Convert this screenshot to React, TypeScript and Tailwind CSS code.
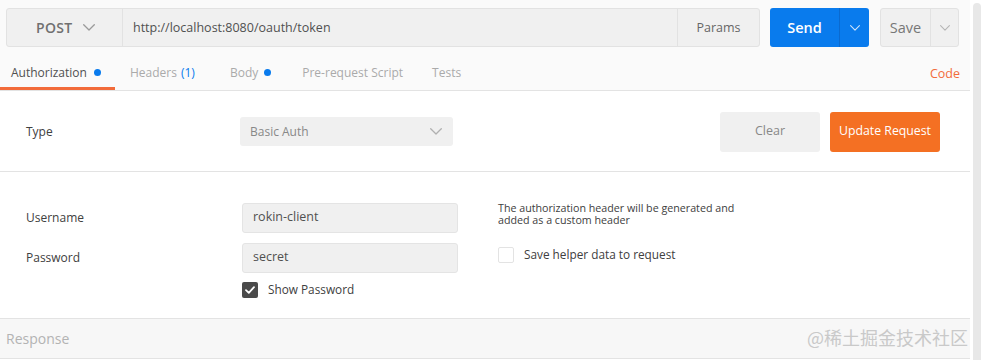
import React from "react";

const Chevron = ({ className = "", color = "#9a9a9a", w = 12, h = 7 }: { className?: string; color?: string; w?: number; h?: number }) => (
  <svg width={w} height={h} viewBox="0 0 12 7" className={className} fill="none">
    <polyline points="0.7,0.7 6,6 11.3,0.7" stroke={color} strokeWidth="1.3" strokeLinejoin="round" strokeLinecap="round" />
  </svg>
);

export default function App() {
  return (
    <div className="w-[981px] h-[360px] bg-white flex relative overflow-hidden font-['Open_Sans',sans-serif]">
      <div className="w-[970px] flex flex-col">
        {/* top */}
        <div className="bg-[#fafafa]">
          <div className="flex pt-[8px] pl-[6px] h-[47px]">
            <div className="flex w-[754px] h-[39px] rounded-[3px] border border-[#e2e2e2] bg-[#f0f0f0]">
              <div className="w-[116px] flex items-center pl-[29px] border-r border-[#e2e2e2]">
                <span className="text-[14px] text-[#707070] font-semibold tracking-[0.3px]">POST</span>
                <Chevron className="ml-[11px]" />
              </div>
              <div className="flex-1 flex items-center pl-[10px] pt-[1px] text-[12.5px] text-[#505050]">http://localhost:8080/oauth/token</div>
              <div className="w-[82px] flex items-center justify-center pt-[1px] border-l border-[#e2e2e2] text-[12.5px] text-[#666]">Params</div>
            </div>
            <div className="ml-[10px] flex w-[99px] h-[39px] rounded-[3px] bg-[#097bed]">
              <div className="w-[69px] flex items-center justify-center text-white text-[14.5px] font-semibold">Send</div>
              <div className="flex-1 flex items-center justify-center border-l border-[#0a6ad0]">
                <Chevron color="#cfe4fb" w={10} h={6} />
              </div>
            </div>
            <div className="ml-[11px] flex w-[79px] h-[39px] rounded-[3px] border border-[#e2e2e2] bg-[#f0f0f0]">
              <div className="w-[49px] flex items-center justify-center text-[#777] text-[14.5px]">Save</div>
              <div className="flex-1 flex items-center justify-center border-l border-[#e2e2e2]">
                <Chevron color="#b5b5b5" w={10} h={6} />
              </div>
            </div>
          </div>
          <div className="flex items-stretch h-[44px] border-b border-[#e3e3e3] text-[12px]">
            <div className="relative flex items-center pt-[8px] pl-[11px] w-[115px] text-[#505050]">
              Authorization
              <span className="ml-[7px] w-[7px] h-[7px] rounded-full bg-[#097bed]" />
              <div className="absolute left-0 right-0 bottom-0 h-[3px] bg-[#f26b3a]" />
            </div>
            <div className="flex items-center pt-[8px] ml-[15px] text-[#aaa]">
              Headers <span className="ml-[4px] text-[#097bed]">(1)</span>
            </div>
            <div className="flex items-center pt-[8px] ml-[35px] text-[#aaa]">
              Body
              <span className="ml-[6px] w-[7px] h-[7px] rounded-full bg-[#097bed]" />
            </div>
            <div className="flex items-center pt-[8px] ml-[31px] text-[#aaa]">Pre-request Script</div>
            <div className="flex items-center pt-[8px] ml-[29px] text-[#aaa]">Tests</div>
            <div className="flex-1" />
            <div className="flex items-end pb-[6px] pr-[10px] text-[#f26b3a] text-[12.5px]">Code</div>
          </div>
        </div>

        {/* type section */}
        <div className="flex items-center h-[81px] pt-[1px] border-b border-[#e3e3e3] text-[12px]">
          <div className="pl-[26px] w-[240px] text-[#404040]">Type</div>
          <div className="w-[213px] h-[29px] rounded-[3px] bg-[#f0f0f0] flex items-center pl-[10px] pr-[11px] text-[#888]">
            <span className="flex-1">Basic Auth</span>
            <Chevron color="#b0b0b0" />
          </div>
          <div className="flex-1" />
          <div className="w-[100px] h-[40px] rounded-[3px] bg-[#f0f0f0] flex items-center justify-center text-[#888] text-[12.5px]">Clear</div>
          <div className="ml-[10px] w-[110px] h-[40px] rounded-[3px] bg-[#f47023] flex items-center justify-center text-white text-[12.3px]">Update Request</div>
          <div className="w-[30px]" />
        </div>

        {/* credentials */}
        <div className="flex h-[146px] pt-[30px] text-[12px] text-[#404040]">
          <div className="flex flex-col pl-[26px]">
            <div className="flex items-center h-[30px] pt-[1px]">
              <span className="w-[216px]">Username</span>
              <div className="w-[216px] h-[30px] rounded-[3px] border border-[#e4e4e4] bg-[#f0f0f0] flex items-center pl-[10px] text-[#505050] text-[12.5px]">rokin-client</div>
            </div>
            <div className="flex items-center h-[30px] mt-[10px] pt-[1px]">
              <span className="w-[216px]">Password</span>
              <div className="w-[216px] h-[30px] rounded-[3px] border border-[#e4e4e4] bg-[#f0f0f0] flex items-center pl-[10px] text-[#505050] text-[12.5px]">secret</div>
            </div>
            <div className="flex items-center h-[16px] mt-[10px] pl-[216px]">
              <div className="w-[16px] h-[16px] rounded-[2px] bg-[#4a4a4a] flex items-center justify-center">
                <svg width="10" height="8" viewBox="0 0 10 8" fill="none">
                  <polyline points="1,4.2 3.8,6.8 9,1.2" stroke="white" strokeWidth="1.8" strokeLinecap="round" strokeLinejoin="round" />
                </svg>
              </div>
              <span className="ml-[10px] text-[11.8px]">Show Password</span>
            </div>
          </div>
          <div className="flex flex-col ml-[40px]">
            <div className="text-[10.7px] leading-[12px] text-[#404040] w-[260px]">
              <div>The authorization header will be generated and</div>
              <div>added as a custom header</div>
            </div>
            <div className="flex items-center mt-[20px]">
              <div className="w-[16px] h-[16px] rounded-[2px] border border-[#e3e3e3] bg-white" />
              <span className="ml-[10px] text-[11.8px]">Save helper data to request</span>
            </div>
          </div>
        </div>

        {/* response */}
        <div className="h-[41px] border-y border-[#e3e3e3] bg-[#f7f7f7] flex items-center pl-[6px] text-[14px] text-[#b3b3b3]">
          Response
        </div>
      </div>
      <div className="ml-[3px] mt-[3px] w-[8px] h-[360px] rounded-t-[4px] bg-[#e8e8e8]" />
      <div className="absolute left-[807px] top-[325px] text-[18px] leading-[24px] text-[#c9c9c9] font-['Noto_Sans_CJK_SC',sans-serif]">@稀土掘金技术社区</div>
    </div>
  );
}
